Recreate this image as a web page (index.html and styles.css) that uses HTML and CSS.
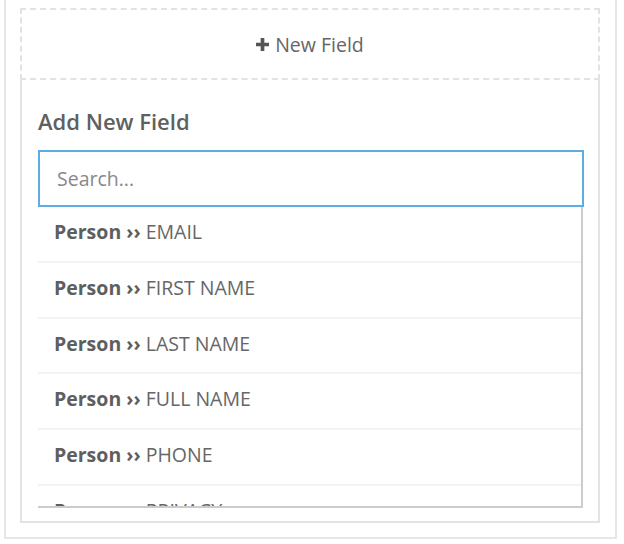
FILE: index.html
```html
<!DOCTYPE html>
<html lang="en">
<head>
    <meta charset="UTF-8">
    <meta name="viewport" content="width=device-width, initial-scale=1.0">
    <title>Add New Field</title>
    <link rel="stylesheet" href="styles.css">
</head>
<body>
    <div class="outer">
        <div class="new-field">
            <svg class="plus" viewBox="0 0 12 12" width="13" height="13">
                <path d="M4.3 0h3.4v4.3H12v3.4H7.7V12H4.3V7.7H0V4.3h4.3z"/>
            </svg>
            <span>New Field</span>
        </div>
        <div class="panel">
            <h2 class="panel-title">Add New Field</h2>
            <input type="text" class="search" placeholder="Search...">
            <ul class="field-list">
                <li><b>Person ››</b> EMAIL</li>
                <li><b>Person ››</b> FIRST NAME</li>
                <li><b>Person ››</b> LAST NAME</li>
                <li><b>Person ››</b> FULL NAME</li>
                <li><b>Person ››</b> PHONE</li>
                <li><b>Person ››</b> PRIVACY</li>
            </ul>
        </div>
    </div>
</body>
</html>
```

FILE: styles.css
```css
body {
    margin: 0;
    font-family: "Open Sans", sans-serif;
    color: #666;
    background-color: #fff;
}
.outer {
    margin: 0 7px 4px 4px;
    padding: 8px 15px 14px 14px;
    border: 2px solid #e6e6e6;
    border-top: none;
}
.new-field {
    height: 68px;
    border: 2px dashed #e2e2e2;
    display: flex;
    align-items: center;
    justify-content: center;
    gap: 6px;
    font-size: 19.5px;
    color: #666;
}
.plus {
    fill: #555;
}
.panel {
    border: 2px solid #e3e3e3;
    border-top: none;
    padding: 27px 14px 13px 16px;
}
.panel-title {
    margin: 0 0 15px 0;
    font-size: 22px;
    line-height: 28px;
    font-weight: 600;
    color: #606060;
}
.search {
    display: block;
    width: 100%;
    box-sizing: border-box;
    height: 57px;
    padding: 0 17px;
    border: 2px solid #5dade2;
    font-family: "Open Sans", sans-serif;
    font-size: 19.5px;
    color: #666;
    outline: none;
}
.search::placeholder {
    color: #888;
}
.field-list {
    list-style: none;
    margin: 0 1px 0 0;
    padding: 0;
    height: 299px;
    overflow: hidden;
    border-right: 2px solid #ccc;
    border-bottom: 2px solid #ccc;
}
.field-list li {
    height: 53.75px;
    line-height: 49.5px;
    padding-left: 16px;
    border-bottom: 2px solid #f3f3f3;
    font-size: 19.5px;
    color: #666;
}
.field-list b {
    color: #5e5e5e;
}
```
